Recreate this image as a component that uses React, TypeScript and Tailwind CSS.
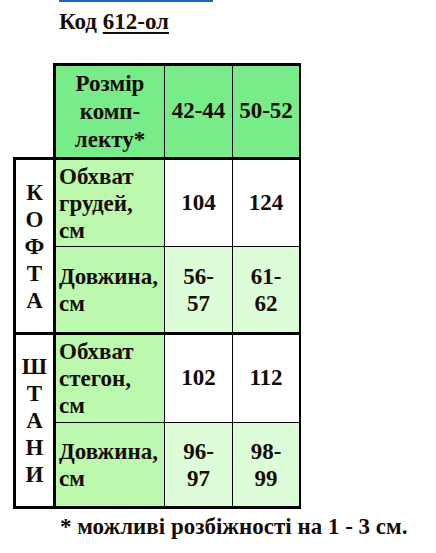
import React from 'react';

const serif = { fontFamily: '"Liberation Serif", "Times New Roman", serif' };

function Vertical({ letters }: { letters: string }) {
  return (
    <div className="flex flex-col items-center justify-center leading-[27px]">
      {letters.split('').map((ch, i) => (
        <span key={i}>{ch}</span>
      ))}
    </div>
  );
}

export default function App() {
  return (
    <div
      className="w-[436px] h-[553px] bg-white text-[#140d05] font-bold text-[23px] overflow-hidden"
      style={serif}
    >
      {/* blue rule */}
      <div className="ml-[59px] w-[154px] h-[2px] bg-[#2563c4]" />

      {/* title */}
      <div className="ml-[59px] mt-[8px] leading-[23px]">
        Код <span className="underline underline-offset-[3px] decoration-[1.5px]">612-ол</span>
      </div>

      {/* size table */}
      <div className="ml-[13px] mt-[30px] grid grid-cols-[40px_111px_68px_69px] grid-rows-[94px_89px_86px_90px_87px] text-center">
        {/* header */}
        <div />
        <div className="border-l-[3px] border-t-[3px] border-black bg-[#78ec88] flex items-center justify-center leading-[28px]">
          <span>
            Розмір
            <br />
            комп-
            <br />
            лекту*
          </span>
        </div>
        <div className="border-l border-t-[3px] border-black bg-[#78ec88] flex items-center justify-center">
          42-44
        </div>
        <div className="border-l border-t-[3px] border-r-[2px] border-black bg-[#78ec88] flex items-center justify-center">
          50-52
        </div>

        {/* Кофта */}
        <div className="row-span-2 border-l-[3px] border-t-[3px] border-black bg-white flex items-center justify-center">
          <Vertical letters="КОФТА" />
        </div>
        <div className="border-l-[3px] border-t-[3px] border-black bg-[#bcf8ad] flex items-center text-left pl-[3px] leading-[27px]">
          <span>
            Обхват
            <br />
            грудей,
            <br />
            см
          </span>
        </div>
        <div className="border-l border-t-[3px] border-black bg-white flex items-center justify-center">104</div>
        <div className="border-l border-t-[3px] border-r-[2px] border-black bg-white flex items-center justify-center">124</div>

        <div className="border-l-[3px] border-t border-black bg-[#bcf8ad] flex items-center text-left pl-[3px] leading-[27px]">
          <span>
            Довжина,
            <br />
            см
          </span>
        </div>
        <div className="border-l border-t border-black bg-[#ddfdd8] flex items-center justify-center leading-[27px]">
          <span>
            56-
            <br />
            57
          </span>
        </div>
        <div className="border-l border-t border-r-[2px] border-black bg-[#ddfdd8] flex items-center justify-center leading-[27px]">
          <span>
            61-
            <br />
            62
          </span>
        </div>

        {/* Штани */}
        <div className="row-span-2 border-l-[3px] border-t-[3px] border-b-[3px] border-black bg-white flex items-center justify-center">
          <Vertical letters="ШТАНИ" />
        </div>
        <div className="border-l-[3px] border-t-[3px] border-black bg-[#bcf8ad] flex items-center text-left pl-[3px] leading-[27px]">
          <span>
            Обхват
            <br />
            стегон,
            <br />
            см
          </span>
        </div>
        <div className="border-l border-t-[3px] border-black bg-white flex items-center justify-center">102</div>
        <div className="border-l border-t-[3px] border-r-[2px] border-black bg-white flex items-center justify-center">112</div>

        <div className="border-l-[3px] border-t border-b-[3px] border-black bg-[#bcf8ad] flex items-center text-left pl-[3px] leading-[27px]">
          <span>
            Довжина,
            <br />
            см
          </span>
        </div>
        <div className="border-l border-t border-b-[3px] border-black bg-[#ddfdd8] flex items-center justify-center leading-[27px]">
          <span>
            96-
            <br />
            97
          </span>
        </div>
        <div className="border-l border-t border-b-[3px] border-r-[2px] border-black bg-[#ddfdd8] flex items-center justify-center leading-[27px]">
          <span>
            98-
            <br />
            99
          </span>
        </div>
      </div>

      {/* footnote */}
      <p className="ml-[60px] mt-[6px] leading-[23px] whitespace-nowrap">* можливі розбіжності на 1 - 3 см.</p>
    </div>
  );
}
